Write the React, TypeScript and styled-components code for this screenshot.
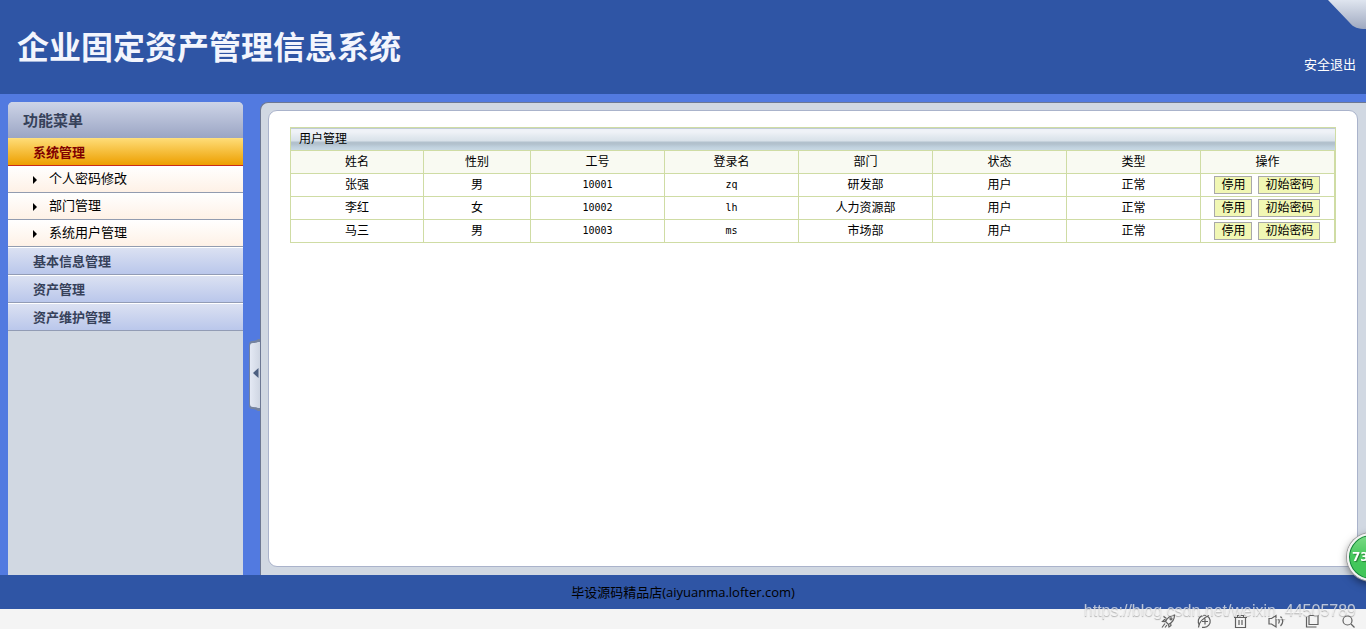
import React from "react";
import styled, { createGlobalStyle, css } from "styled-components";

const songti = `"DejaVu Sans Mono", "Noto Sans CJK SC", monospace`;
const yahei = `"Open Sans", "Noto Sans CJK SC", sans-serif`;

const GlobalStyle = createGlobalStyle`
  *, *::before, *::after { box-sizing: border-box; }
  body { margin: 0; background: #f4f4f4; font-family: ${yahei}; font-size: 13px; color: #000; }
  button { font: inherit; color: inherit; margin: 0; cursor: pointer; }
  a { color: inherit; text-decoration: none; }
`;

const Page = styled.div`
  display: flex;
  flex-direction: column;
  min-height: 100vh;
`;

const Header = styled.header`
  position: relative;
  display: flex;
  justify-content: space-between;
  height: 94px;
  padding: 0 10px 0 17px;
  background: #2f55a5;
`;

const SystemTitle = styled.h1`
  margin: 0;
  font-family: "Noto Sans CJK SC", sans-serif;
  font-size: 32px;
  font-weight: 700;
  line-height: 90px;
  color: #f3f5fd;
`;

const LogoutLink = styled.a`
  align-self: flex-end;
  margin-bottom: 20px;
  line-height: 20px;
  color: #fff;
`;

const CornerFold = styled.svg`
  position: absolute;
  top: 0;
  right: 0;
`;

const Main = styled.div`
  display: flex;
  flex: 1;
  padding: 8px 0 0 8px;
  background: #527ae0;
`;

const Sidebar = styled.nav`
  flex: none;
  width: 235px;
  border-radius: 5px 5px 0 0;
  background: #d1d8e2;
  overflow: hidden;
`;

const MenuHeading = styled.h2`
  margin: 0;
  padding-left: 15px;
  font-size: 15px;
  font-weight: 700;
  line-height: 36px;
  color: #36415a;
  background: linear-gradient(#cdd4e7, #9ba5c4);
`;

const MenuGroup = styled.button<{ $active?: boolean }>`
  display: block;
  width: 100%;
  height: 28px;
  padding: 0 0 0 25px;
  border: 0;
  border-bottom: 1px solid #929cb5;
  font-weight: 700;
  line-height: 26px;
  text-align: left;
  color: #36415a;
  background: linear-gradient(#dbe1f2, #bac7eb);
  border-top: 1px solid #fff;

  ${(p) =>
    p.$active &&
    css`
      color: #800000;
      border-top-color: #ffdf7c;
      border-bottom-color: #c92a1c;
      background: linear-gradient(#fedb74, #ed9f00);
    `}
`;

const SubMenu = styled.ul`
  margin: 0;
  padding: 0;
  list-style: none;
`;

const SubMenuLink = styled.a`
  display: flex;
  align-items: center;
  gap: 12px;
  height: 27px;
  padding-left: 25px;
  border-bottom: 1px solid #929cb0;
  line-height: 24px;
  background: linear-gradient(#fff, #fef1e6);

  &::before {
    content: "";
    margin-top: 2px;
    border: 4px solid transparent;
    border-left-color: #000;
    border-right-width: 0;
  }
`;

const SubMenuText = styled.span`
  padding-bottom: 2px;
`;

const Splitter = styled.div`
  flex: none;
  display: flex;
  align-items: center;
  justify-content: flex-end;
  width: 18px;
  padding-top: 72px;
`;

const CollapseButton = styled.button`
  width: 12px;
  height: 72px;
  padding: 0;
  border: 0;
  background: none;

  svg {
    display: block;
  }
`;

const ContentFrame = styled.main`
  display: flex;
  flex: 1;
  min-width: 0;
  margin-left: -1px;
  padding: 7px 8px 8px 7px;
  border: 1px solid #6d7893;
  border-width: 1px 0 0 1px;
  border-radius: 8px 0 0 0;
  background: #d1d8e2;
`;

const ContentCard = styled.div`
  flex: 1;
  min-width: 0;
  padding: 16px 21px;
  border: 1px solid #aab3cb;
  border-radius: 9px;
  background: #fff;
`;

const UserTable = styled.table`
  width: 100%;
  table-layout: fixed;
  border: 1px solid #cfdca4;
  border-width: 1px 1px 0 1px;
  border-collapse: separate;
  border-spacing: 0;
  font-family: ${songti};
  font-size: 12px;
`;

const TableTitle = styled.th`
  height: 23px;
  padding: 0 8px;
  border-bottom: 1px solid #cfdca4;
  font-weight: 400;
  line-height: 22px;
  text-align: left;
  background: linear-gradient(
    #bfcad6 0 1px,
    #eff2f7 1px 4px,
    #e4eaf0 8px,
    #d8e1e9 13px,
    #b2c1cd 14px 16px,
    #bfd0dd 19px,
    #c9d9e4 22px
  );
`;

const cell = css`
  height: 23px;
  padding: 0;
  border: 1px solid #cfdca4;
  border-width: 0 1px 1px 0;
  font-weight: 400;
  line-height: 20px;
  text-align: center;
`;

const HeadCell = styled.th`
  ${cell}
  background: #f9faf2;
`;

const Cell = styled.td<{ $latin?: boolean }>`
  ${cell}
  font-size: ${(p) => (p.$latin ? "10px" : "12px")};
`;

const Actions = styled.div`
  display: flex;
  align-items: center;
  justify-content: center;
  gap: 6px;
`;

const ActionButton = styled.button`
  height: 18px;
  padding: 0 6px;
  border: 1px solid #a9a9a9;
  line-height: 16px;
  background: #f1f7b4;
`;

const Footer = styled.footer`
  height: 34px;
  line-height: 34px;
  text-align: center;
  background: #2f55a5;
`;

const StatusBar = styled.div`
  display: flex;
  justify-content: flex-end;
  gap: 20px;
  height: 20px;
  padding: 4px 10px 0 0;
  background: #f4f4f4;
  overflow: hidden;
`;

const StatusButton = styled.button`
  width: 16px;
  height: 16px;
  padding: 0;
  border: 0;
  background: none;

  svg {
    display: block;
    fill: none;
    stroke: #606060;
    stroke-width: 1.2;
  }
`;

const Watermark = styled.div`
  position: fixed;
  right: 10px;
  bottom: 8px;
  font-family: "Liberation Sans", sans-serif;
  font-size: 16px;
  line-height: 20px;
  color: rgba(255, 255, 255, 0.65);
  text-shadow: 0 1px 1px rgba(110, 110, 110, 0.5);
  pointer-events: none;
`;

const ScoreBadge = styled.div`
  position: fixed;
  right: -29px;
  bottom: 48px;
  width: 48px;
  height: 48px;
  padding-left: 3px;
  border: 2px solid #f3f3f3;
  border-radius: 50%;
  font-family: "DejaVu Sans", sans-serif;
  font-size: 12px;
  font-weight: 700;
  line-height: 44px;
  color: #fff;
  text-shadow: 1px 1px 1px #287c35;
  background: linear-gradient(#7edb88, #45c85c 50%, #3fc458);
  box-shadow: 0 0 0 1px #999, 0 3px 8px rgba(0, 0, 0, 0.5), inset 0 0 0 1px #16803d;
`;

const columns = [
  { label: "姓名", width: 133 },
  { label: "性别", width: 107 },
  { label: "工号", width: 134 },
  { label: "登录名", width: 134 },
  { label: "部门", width: 134 },
  { label: "状态", width: 134 },
  { label: "类型", width: 134 },
  { label: "操作", width: 134 },
];
const totalWidth = columns.reduce((sum, c) => sum + c.width, 0);

const users = [
  { name: "张强", sex: "男", no: "10001", login: "zq", dept: "研发部" },
  { name: "李红", sex: "女", no: "10002", login: "lh", dept: "人力资源部" },
  { name: "马三", sex: "男", no: "10003", login: "ms", dept: "市场部" },
];

const statusIcons = [
  {
    label: "加速",
    art: (
      <>
        <path d="M5.500 8.500C7.500 4.500 10.500 2.500 14.500 2C14.500 6 12.500 9.500 8.500 11.500Z" />
        <path d="M6 7.500L4.500 6.500L2.500 8.500L5.500 8.700M8.500 11.300L9 14L11 12.500L10.500 10M5 10.500L2 14.500M7 12L5 14.500M3.500 3.500L6.500 5.500" />
        <circle cx="11" cy="5.800" r="1" />
      </>
    ),
  },
  {
    label: "浏览",
    art: (
      <>
        <path d="M3.500 12A6 6 0 1 1 8 14.300H6" />
        <path d="M2.500 14.500C3 9 7 5 13 2.500M6 8.500H12M9 5.500V11.500" />
      </>
    ),
  },
  {
    label: "清理",
    art: <path d="M2 4.500H15M5.500 4V2.500H11.500V4M3.500 4.500V14.500H13.500V4.500M7 7V12M10 7V12" />,
  },
  {
    label: "声音",
    art: <path d="M1 5.500H3.500L8 2.500V14L3.500 11H1ZM10.500 6Q12 8.200 10.500 10.500M12.500 3.500Q17 8.200 12.500 13" />,
  },
  {
    label: "窗口",
    art: <path d="M5 2.500H14V11.500H5ZM2.500 4V14H12.500" />,
  },
  {
    label: "缩放",
    art: (
      <>
        <circle cx="7.500" cy="7.500" r="4.500" />
        <path d="M11 11L14.500 14.500" />
      </>
    ),
  },
];

export default function App() {
  return (
    <>
      <GlobalStyle />
      <Page>
        <Header>
          <SystemTitle>企业固定资产管理信息系统</SystemTitle>
          <CornerFold width="40" height="30" viewBox="0 0 40 30" aria-hidden="true">
            <defs>
              <linearGradient id="fold" x1="0" y1="0" x2="0" y2="1">
                <stop offset="0" stopColor="#dfe5ef" />
                <stop offset="1" stopColor="#9fa9c0" />
              </linearGradient>
            </defs>
            <path d="M2 0H40V29C32 29 28 28 23 22Z" fill="url(#fold)" />
          </CornerFold>
          <LogoutLink href="#logout">安全退出</LogoutLink>
        </Header>
        <Main>
          <Sidebar>
            <MenuHeading>功能菜单</MenuHeading>
            <MenuGroup $active>系统管理</MenuGroup>
            <SubMenu>
              {["个人密码修改", "部门管理", "系统用户管理"].map((item) => (
                <li key={item}>
                  <SubMenuLink href="#menu">
                    <SubMenuText>{item}</SubMenuText>
                  </SubMenuLink>
                </li>
              ))}
            </SubMenu>
            <MenuGroup>基本信息管理</MenuGroup>
            <MenuGroup>资产管理</MenuGroup>
            <MenuGroup>资产维护管理</MenuGroup>
          </Sidebar>
          <Splitter>
            <CollapseButton aria-label="收起菜单">
              <svg width="12" height="72" viewBox="0 0 12 72">
                <defs>
                  <linearGradient id="handle">
                    <stop offset="0" stopColor="#e4e9f4" />
                    <stop offset="1" stopColor="#cdd4e1" />
                  </linearGradient>
                </defs>
                <path d="M12 0H9Q7 2 3 2Q0 2 0 6V66Q0 70 3 70Q7 70 9 72H12Z" fill="#75839f" />
                <path d="M12 3H9Q7 4 4 4Q1 4 1 7V65Q1 68 4 68Q7 68 9 69H12Z" fill="url(#handle)" />
                <path d="M9.500 29V39L4 34Z" fill="#4c5f80" />
              </svg>
            </CollapseButton>
          </Splitter>
          <ContentFrame>
            <ContentCard>
              <UserTable>
                <colgroup>
                  {columns.map((c) => (
                    <col key={c.label} style={{ width: `${(c.width / totalWidth) * 100}%` }} />
                  ))}
                </colgroup>
                <thead>
                  <tr>
                    <TableTitle colSpan={columns.length}>用户管理</TableTitle>
                  </tr>
                  <tr>
                    {columns.map((c) => (
                      <HeadCell key={c.label} scope="col">
                        {c.label}
                      </HeadCell>
                    ))}
                  </tr>
                </thead>
                <tbody>
                  {users.map((u) => (
                    <tr key={u.no}>
                      <Cell>{u.name}</Cell>
                      <Cell>{u.sex}</Cell>
                      <Cell $latin>{u.no}</Cell>
                      <Cell $latin>{u.login}</Cell>
                      <Cell>{u.dept}</Cell>
                      <Cell>用户</Cell>
                      <Cell>正常</Cell>
                      <Cell>
                        <Actions>
                          <ActionButton>停用</ActionButton>
                          <ActionButton>初始密码</ActionButton>
                        </Actions>
                      </Cell>
                    </tr>
                  ))}
                </tbody>
              </UserTable>
            </ContentCard>
          </ContentFrame>
        </Main>
        <Footer>毕设源码精品店(aiyuanma.lofter.com)</Footer>
        <StatusBar>
          {statusIcons.map((icon) => (
            <StatusButton key={icon.label} aria-label={icon.label}>
              <svg width="16" height="16" viewBox="0 0 16 16">
                {icon.art}
              </svg>
            </StatusButton>
          ))}
        </StatusBar>
      </Page>
      <ScoreBadge>73</ScoreBadge>
      <Watermark>https://blog.csdn.net/weixin_44505789</Watermark>
    </>
  );
}
